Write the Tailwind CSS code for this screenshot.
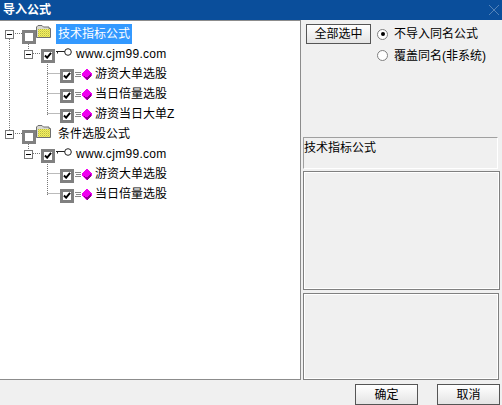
<!DOCTYPE html>
<html lang="zh">
<head>
<meta charset="UTF-8">
<title>导入公式</title>
<script src="https://cdn.jsdelivr.net/npm/@tailwindcss/browser@4"></script>
</head>
<body class="w-[502px] h-[405px] overflow-hidden bg-[#f0f0f0] text-[12px] leading-none text-black font-['Liberation_Sans','Noto_Sans_CJK_SC',sans-serif]">

<svg width="0" height="0" class="absolute">
  <defs>
    <symbol id="check" viewBox="0 0 9 8"><path d="M1 4 L3.500 6.500 L8 1" fill="none" stroke="#000" stroke-width="2.200"/></symbol>
    <symbol id="gem" viewBox="0 0 17 11">
      <path d="M0 3.500h6M1 5.500h5M0 7.500h6" stroke="#8a8a8a" stroke-width="1"/>
      <path d="M12 0 L17 4 L17 7 L12 11 L7 7 L7 4 Z" fill="#f000f0" shape-rendering="crispEdges"/>
      <path d="M8 7 L12 11 L16 7 L16 5 L12 8 Z" fill="#900090" shape-rendering="crispEdges"/>
    </symbol>
    <symbol id="key" viewBox="0 0 16 9">
      <path d="M0 3.500h9M1.500 3.500v2" stroke="#222" stroke-width="1" fill="none"/>
      <circle cx="12" cy="4" r="3.300" fill="#fff" stroke="#222"/>
    </symbol>
    <pattern id="dots" width="2" height="2" patternUnits="userSpaceOnUse">
      <rect width="2" height="2" fill="#f6f25c"/>
      <rect width="1" height="1" fill="#b8b84a"/>
      <rect x="1" y="1" width="1" height="1" fill="#d8d455"/>
    </pattern>
    <symbol id="folder" viewBox="0 0 15 13">
      <path d="M0.500 12.500V2L2 0.500H6L7.500 2H13V3.500H14.500V12.500Z" fill="#d8d8d0" stroke="#6e6e6e"/>
      <rect x="2" y="4" width="12" height="8" fill="url(#dots)"/>
    </symbol>
  </defs>
</svg>

<div class="h-[20px] bg-[#0a4e9b] flex items-center justify-between pl-[3px] pr-[1px]">
  <span class="text-white font-bold text-[12px]">导入公式</span>
  <svg width="12" height="12" viewBox="0 0 12 12" class="mr-[1px] opacity-30"><path d="M1 1 L11 11 M11 1 L1 11" stroke="#fff" fill="none"/></svg>
</div>

<div class="flex h-[360px]">
  <!-- 左边的树 -->
  <div class="relative w-[302px] h-[360px] bg-white border-t border-r border-b border-[#8c8c8c] pt-[3px]">
    <svg class="absolute left-0 top-0" width="100" height="200" fill="none" stroke="#777" stroke-dasharray="1 1">
      <path d="M9.500 16V111M13 12.500H22M28.500 21V30M33 32.500H41M47.500 41V94M47.500 52.500H60M47.500 72.500H60M47.500 92.500H60"/>
      <path d="M13 112.500H22M28.500 121V130M33 132.500H41M47.500 141V174M47.500 152.500H60M47.500 172.500H60"/>
    </svg>

    <div class="relative h-5 flex items-center">
      <div class="ml-[5px] w-[9px] h-[9px] bg-white border border-[#777] flex items-center justify-center"><div class="w-[5px] h-px bg-black"></div></div>
      <div class="ml-[8px] mt-[5px] w-[14px] h-[14px] bg-white border-[3px] border-[#808080]"></div>
      <svg class="-mt-[5px]" width="15" height="13"><use href="#folder"/></svg>
      <span class="ml-[5px] h-5 px-[2px] bg-[#3399ff] text-white flex items-center text-[12px]">技术指标公式</span>
    </div>
    <div class="relative h-5 flex items-center">
      <div class="ml-[24px] w-[9px] h-[9px] bg-white border border-[#777] flex items-center justify-center"><div class="w-[5px] h-px bg-black"></div></div>
      <div class="ml-[8px] mt-[3px] w-[14px] h-[14px] bg-white border-[3px] border-[#808080] flex items-center justify-center"><svg width="8" height="7"><use href="#check"/></svg></div>
      <svg class="ml-[1px] -mt-[3px]" width="16" height="9"><use href="#key"/></svg>
      <span class="ml-[4px] -mt-[1px] tracking-[0.3px]">www.cjm99.com</span>
    </div>
    <div class="relative h-5 flex items-center">
      <div class="ml-[60px] mt-[3px] w-[14px] h-[14px] bg-white border-[3px] border-[#808080] flex items-center justify-center"><svg width="8" height="7"><use href="#check"/></svg></div>
      <svg class="ml-[1px] mt-[1px]" width="17" height="11"><use href="#gem"/></svg>
      <span class="ml-[3px] -mt-[1px]">游资大单选股</span>
    </div>
    <div class="relative h-5 flex items-center">
      <div class="ml-[60px] mt-[3px] w-[14px] h-[14px] bg-white border-[3px] border-[#808080] flex items-center justify-center"><svg width="8" height="7"><use href="#check"/></svg></div>
      <svg class="ml-[1px] mt-[1px]" width="17" height="11"><use href="#gem"/></svg>
      <span class="ml-[3px] -mt-[1px]">当日倍量选股</span>
    </div>
    <div class="relative h-5 flex items-center">
      <div class="ml-[60px] mt-[3px] w-[14px] h-[14px] bg-white border-[3px] border-[#808080] flex items-center justify-center"><svg width="8" height="7"><use href="#check"/></svg></div>
      <svg class="ml-[1px] mt-[1px]" width="17" height="11"><use href="#gem"/></svg>
      <span class="ml-[3px] -mt-[1px]">游资当日大单Z</span>
    </div>

    <div class="relative h-5 flex items-center">
      <div class="ml-[5px] w-[9px] h-[9px] bg-white border border-[#777] flex items-center justify-center"><div class="w-[5px] h-px bg-black"></div></div>
      <div class="ml-[8px] mt-[5px] w-[14px] h-[14px] bg-white border-[3px] border-[#808080]"></div>
      <svg class="-mt-[5px]" width="15" height="13"><use href="#folder"/></svg>
      <span class="ml-[7px]">条件选股公式</span>
    </div>
    <div class="relative h-5 flex items-center">
      <div class="ml-[24px] w-[9px] h-[9px] bg-white border border-[#777] flex items-center justify-center"><div class="w-[5px] h-px bg-black"></div></div>
      <div class="ml-[8px] mt-[3px] w-[14px] h-[14px] bg-white border-[3px] border-[#808080] flex items-center justify-center"><svg width="8" height="7"><use href="#check"/></svg></div>
      <svg class="ml-[1px] -mt-[3px]" width="16" height="9"><use href="#key"/></svg>
      <span class="ml-[4px] -mt-[1px] tracking-[0.3px]">www.cjm99.com</span>
    </div>
    <div class="relative h-5 flex items-center">
      <div class="ml-[60px] mt-[3px] w-[14px] h-[14px] bg-white border-[3px] border-[#808080] flex items-center justify-center"><svg width="8" height="7"><use href="#check"/></svg></div>
      <svg class="ml-[1px] mt-[1px]" width="17" height="11"><use href="#gem"/></svg>
      <span class="ml-[3px] -mt-[1px]">游资大单选股</span>
    </div>
    <div class="relative h-5 flex items-center">
      <div class="ml-[60px] mt-[3px] w-[14px] h-[14px] bg-white border-[3px] border-[#808080] flex items-center justify-center"><svg width="8" height="7"><use href="#check"/></svg></div>
      <svg class="ml-[1px] mt-[1px]" width="17" height="11"><use href="#gem"/></svg>
      <span class="ml-[3px] -mt-[1px]">当日倍量选股</span>
    </div>
  </div>

  <!-- 右边 -->
  <div class="flex-1 flex flex-col pl-[2px] pr-[2px]">
    <div class="h-[117px] pl-[3px] pt-[4px] flex">
      <button class="w-[65px] h-[20px] border-[1px] border-[#555] bg-gradient-to-b from-white to-[#e4e4e4] text-[12px]">全部选中</button>
      <div class="ml-[6px] flex flex-col">
        <div class="h-[20px] flex items-center">
          <span class="w-[11px] h-[11px] rounded-full bg-white border border-[#808080] flex items-center justify-center"><span class="w-[4px] h-[4px] rounded-full bg-black"></span></span>
          <span class="ml-[6px]">不导入同名公式</span>
        </div>
        <div class="h-[21px] mt-[1px] flex items-center">
          <span class="w-[11px] h-[11px] rounded-full bg-white border border-[#808080]"></span>
          <span class="ml-[6px]">覆盖同名(非系统)</span>
        </div>
      </div>
    </div>
    <div class="h-[32px] w-[195px] border border-[#a0a0a0] border-r-white border-b-white pt-[4px]">技术指标公式</div>
    <div class="h-[119px] mt-[2px] w-[197px] border border-[#808080] shadow-[inset_0_0_0_1px_#fff]"></div>
    <div class="h-[87px] mt-[3px] w-[196px] border border-[#808080] shadow-[inset_0_0_0_1px_#fff]"></div>
  </div>
</div>

<div class="h-[25px] flex justify-end items-end gap-[19px] pr-[2px]">
  <button class="w-[63px] h-[21px] border border-[#555] bg-gradient-to-b from-white to-[#e4e4e4] text-[12px]">确定</button>
  <button class="w-[63px] h-[21px] border border-[#555] bg-gradient-to-b from-white to-[#e4e4e4] text-[12px]">取消</button>
</div>
</body>
</html>
